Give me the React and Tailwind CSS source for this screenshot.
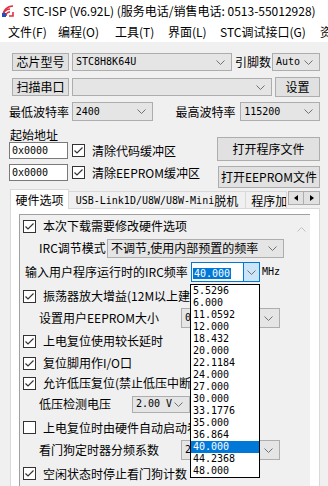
import React from "react"

const freqs = ["5.5296", "6.000", "11.0592", "12.000", "18.432", "20.000", "22.1184", "24.000", "27.000", "30.000", "33.1776", "35.000", "36.864", "40.000", "44.2368", "48.000"]

function Chevron() {
  return (
    <svg width="9" height="5" viewBox="0 0 9 5" className="shrink-0">
      <polyline points="0.5,0.5 4.5,4.5 8.5,0.5" fill="none" stroke="#707070" strokeWidth="1" />
    </svg>
  )
}

function Select({ className = "", children }) {
  return (
    <div className={`flex items-center justify-between border border-[#adadad] bg-[#e5e5e5] pl-[3px] pr-[6px] overflow-hidden ${className}`}>
      <span className="font-['DejaVu_Sans_Mono',monospace] text-[10px] text-black whitespace-nowrap">{children}</span>
      <Chevron />
    </div>
  )
}

function Button({ className = "", children }) {
  return (
    <div className={`flex items-center justify-center border border-[#adadad] bg-[#e1e1e1] text-[12px] text-black whitespace-nowrap ${className}`}>
      {children}
    </div>
  )
}

function Check({ checked = true }) {
  return (
    <div className="w-[13px] h-[13px] shrink-0 border border-[#333333] bg-white flex items-center justify-center">
      {checked && (
        <svg width="11" height="11" viewBox="0 0 11 11">
          <polyline points="1.5,5.5 4,8 9.5,2.5" fill="none" stroke="#333333" strokeWidth="1.2" />
        </svg>
      )}
    </div>
  )
}

function CheckRow({ checked, children, className = "" }) {
  return (
    <div className={`flex items-center pl-[3px] whitespace-nowrap ${className}`}>
      <Check checked={checked} />
      <span className="ml-[7px]">{children}</span>
    </div>
  )
}

function Logo() {
  return (
    <svg width="12" height="12" viewBox="0 0 12 12">
      <path d="M1 11 A10 10 0 0 1 11 1" fill="none" stroke="#e03040" strokeWidth="1.6" />
      <path d="M1 11 A7 7 0 0 1 8 4" fill="none" stroke="#e03040" strokeWidth="1.6" />
      <path d="M4 11 A4 4 0 0 1 8 7" fill="none" stroke="#e03040" strokeWidth="1.6" />
      <rect x="0" y="8" width="4" height="4" fill="#2050c0" />
      <path d="M7 11 L11 11 L11 7" fill="none" stroke="#e03040" strokeWidth="1.6" />
    </svg>
  )
}

export default function App() {
  return (
    <div className="w-[328px] h-[486px] overflow-hidden bg-[#f0f0f0] font-['Noto_Sans_CJK_SC','Noto_Sans',sans-serif] text-[12px] text-black leading-none">
      {/* title bar */}
      <div className="h-[21px] bg-white flex items-center pl-[2px] whitespace-nowrap">
        <Logo />
        <span className="ml-[9px] text-[12px]">STC-ISP (V6.92L) (服务电话/销售电话: 0513-55012928)</span>
      </div>
      {/* menu */}
      <div className="h-[21px] bg-white flex items-center pl-[8px] whitespace-nowrap">
        <span className="w-[50px] shrink-0">文件(F)</span>
        <span className="w-[57px] shrink-0">编程(O)</span>
        <span className="w-[53px] shrink-0">工具(T)</span>
        <span className="w-[52px] shrink-0">界面(L)</span>
        <span className="w-[100px] shrink-0">STC调试接口(G)</span>
        <span className="shrink-0">资</span>
      </div>

      <div className="pl-[12px] pr-[8px] pt-[11px]">
        <div className="flex items-center h-[18px]">
          <Button className="w-[57px] h-[18px]">芯片型号</Button>
          <Select className="ml-[3px] w-[160px] h-[18px]">STC8H8K64U</Select>
          <span className="ml-[3px] w-[37px] whitespace-nowrap">引脚数</span>
          <Select className="w-[48px] h-[18px] pr-[4px]">Auto</Select>
        </div>
        <div className="flex items-center h-[20px] mt-[6px]">
          <Button className="w-[57px] h-[18px]">扫描串口</Button>
          <Select className="ml-[3px] w-[200px] h-[18px]"></Select>
          <Button className="ml-[3px] w-[45px] h-[20px]">设置</Button>
        </div>
      </div>
      <div className="flex items-center h-[19px] mt-[5px] pl-[9px] pr-[8px]">
        <span className="w-[63px]">最低波特率</span>
        <Select className="w-[81px] h-[19px]">2400</Select>
        <span className="ml-[23px] w-[65px]">最高波特率</span>
        <Select className="w-[80px] h-[19px]">115200</Select>
      </div>

      <div className="flex pl-[9px] pr-[8px] mt-[7px]">
        <div className="w-[207px]">
          <div className="h-[14px] flex items-center pl-[1px]">起始地址</div>
          <div className="flex items-center h-[17px]">
            <div className="w-[59px] h-[17px] border border-[#7a7a7a] bg-white flex items-center pl-[2px] font-['DejaVu_Sans_Mono',monospace] text-[10px]">0x0000</div>
            <CheckRow checked className="ml-[1px]">清除代码缓冲区</CheckRow>
          </div>
          <div className="flex items-center h-[17px] mt-[5px]">
            <div className="w-[59px] h-[17px] border border-[#7a7a7a] bg-white flex items-center pl-[2px] font-['DejaVu_Sans_Mono',monospace] text-[10px]">0x0000</div>
            <CheckRow checked className="ml-[1px]">清除EEPROM缓冲区</CheckRow>
          </div>
        </div>
        <div className="flex flex-col items-end flex-1 pt-[9px]">
          <Button className="w-[103px] h-[24px]">打开程序文件</Button>
          <Button className="w-[102px] h-[22px] mt-[5px]">打开EEPROM文件</Button>
        </div>
      </div>

      {/* tabs */}
      <div className="relative mt-[2px] pl-[10px] pr-[8px]">
        <div className="flex items-end h-[19px] whitespace-nowrap">
          <div className="h-[20px] w-[59px] bg-white border border-b-0 border-[#d9d9d9] flex items-center justify-center relative z-10">硬件选项</div>
          <div className="h-[18px] w-[178px] border border-l-0 border-b-0 border-[#d9d9d9] flex items-center justify-center">
            <span className="font-['DejaVu_Sans_Mono',monospace] text-[10px]">USB-Link1D/U8W/U8W-Mini</span>脱机
          </div>
          <div className="h-[18px] w-[41px] border border-l-0 border-b-0 border-[#d9d9d9] flex items-center pl-[5px] overflow-hidden">程序加</div>
          <div className="flex self-start mt-[1px] ml-[1px]">
            <div className="w-[16px] h-[14px] border border-[#adadad] bg-[#e1e1e1] flex items-center justify-center">
              <svg width="4" height="6" viewBox="0 0 4 6"><polygon points="4,0 0,3 4,6" fill="#000" /></svg>
            </div>
            <div className="w-[16px] h-[14px] border border-l-0 border-[#adadad] bg-[#e1e1e1] flex items-center justify-center">
              <svg width="4" height="6" viewBox="0 0 4 6"><polygon points="0,0 4,3 0,6" fill="#000" /></svg>
            </div>
          </div>
        </div>
        <div className="border border-[#d9d9d9] bg-white h-[300px] -mt-px pl-[8px] pt-[5px] flex">
          <div className="w-[273px] h-[290px] border-l border-t border-[#a0a0a0] bg-[#f0f0f0] whitespace-nowrap">
            <CheckRow checked className="h-[22px]">本次下载需要修改硬件选项</CheckRow>
            <div className="flex items-center h-[22px] pl-[19px]">
              <span className="w-[68px]">IRC调节模式</span>
              <Select className="w-[177px] h-[19px]">
                <span className="font-['Noto_Sans_CJK_SC',sans-serif] text-[12px]">不调节,使用内部预置的频率</span>
              </Select>
            </div>
            <div className="flex items-center h-[26px] pl-[5px]">
              <span className="w-[166px]">输入用户程序运行时的IRC频率</span>
              <div className="w-[69px] h-[20px] border border-[#0078d7] bg-white flex items-center">
                <div className="flex-1 pl-[1px]">
                  <span className="bg-[#0078d7] text-white font-['DejaVu_Sans_Mono',monospace] text-[10px] px-px">40.000</span>
                </div>
                <div className="w-[16px] h-full bg-[#cce4f7] border-l border-[#0078d7] flex items-center justify-center">
                  <Chevron />
                </div>
              </div>
              <span className="ml-[2px] font-['DejaVu_Sans_Mono',monospace] text-[10px]">MHz</span>
            </div>
            <CheckRow checked className="h-[22px]">振荡器放大增益(12M以上建议选择)</CheckRow>
            <div className="flex items-center h-[22px] pl-[19px]">
              <span className="w-[142px]">设置用户EEPROM大小</span>
              <Select className="w-[99px] h-[20px]">0.5 K</Select>
            </div>
            <CheckRow checked className="h-[24px]">上电复位使用较长延时</CheckRow>
            <CheckRow checked className="h-[20px]">复位脚用作I/O口</CheckRow>
            <CheckRow checked className="h-[20px]">允许低压复位(禁止低压中断)</CheckRow>
            <div className="flex items-center h-[22px] pl-[19px]">
              <span className="w-[93px]">低压检测电压</span>
              <Select className="w-[58px] h-[17px]">2.00 V</Select>
            </div>
            <CheckRow checked={false} className="h-[25px]">上电复位时由硬件自动启动看门狗</CheckRow>
            <div className="flex items-center h-[20px] pl-[19px]">
              <span className="w-[142px]">看门狗定时器分频系数</span>
              <Select className="w-[99px] h-[20px]">256</Select>
            </div>
            <CheckRow checked className="h-[27px]">空闲状态时停止看门狗计数</CheckRow>
          </div>
          <div className="w-[18px] h-[290px] bg-[#f0f0f0] border-t border-[#a0a0a0] flex justify-center pt-[12px]">
            <svg width="9" height="5" viewBox="0 0 9 5"><polyline points="0.5,4.5 4.5,0.5 8.5,4.5" fill="none" stroke="#c0c0c0" strokeWidth="1" /></svg>
          </div>
        </div>

        {/* dropdown list */}
        <div className="absolute left-[190px] top-[94px] w-[70px] border border-black bg-white z-20">
          {freqs.map((f) => (
            <div key={f} className={`h-[12px] flex items-center pl-[2px] font-['DejaVu_Sans_Mono',monospace] text-[10px] ${f === "40.000" ? "bg-[#0078d7] text-white" : "text-black"}`}>{f}</div>
          ))}
        </div>
      </div>
    </div>
  )
}
